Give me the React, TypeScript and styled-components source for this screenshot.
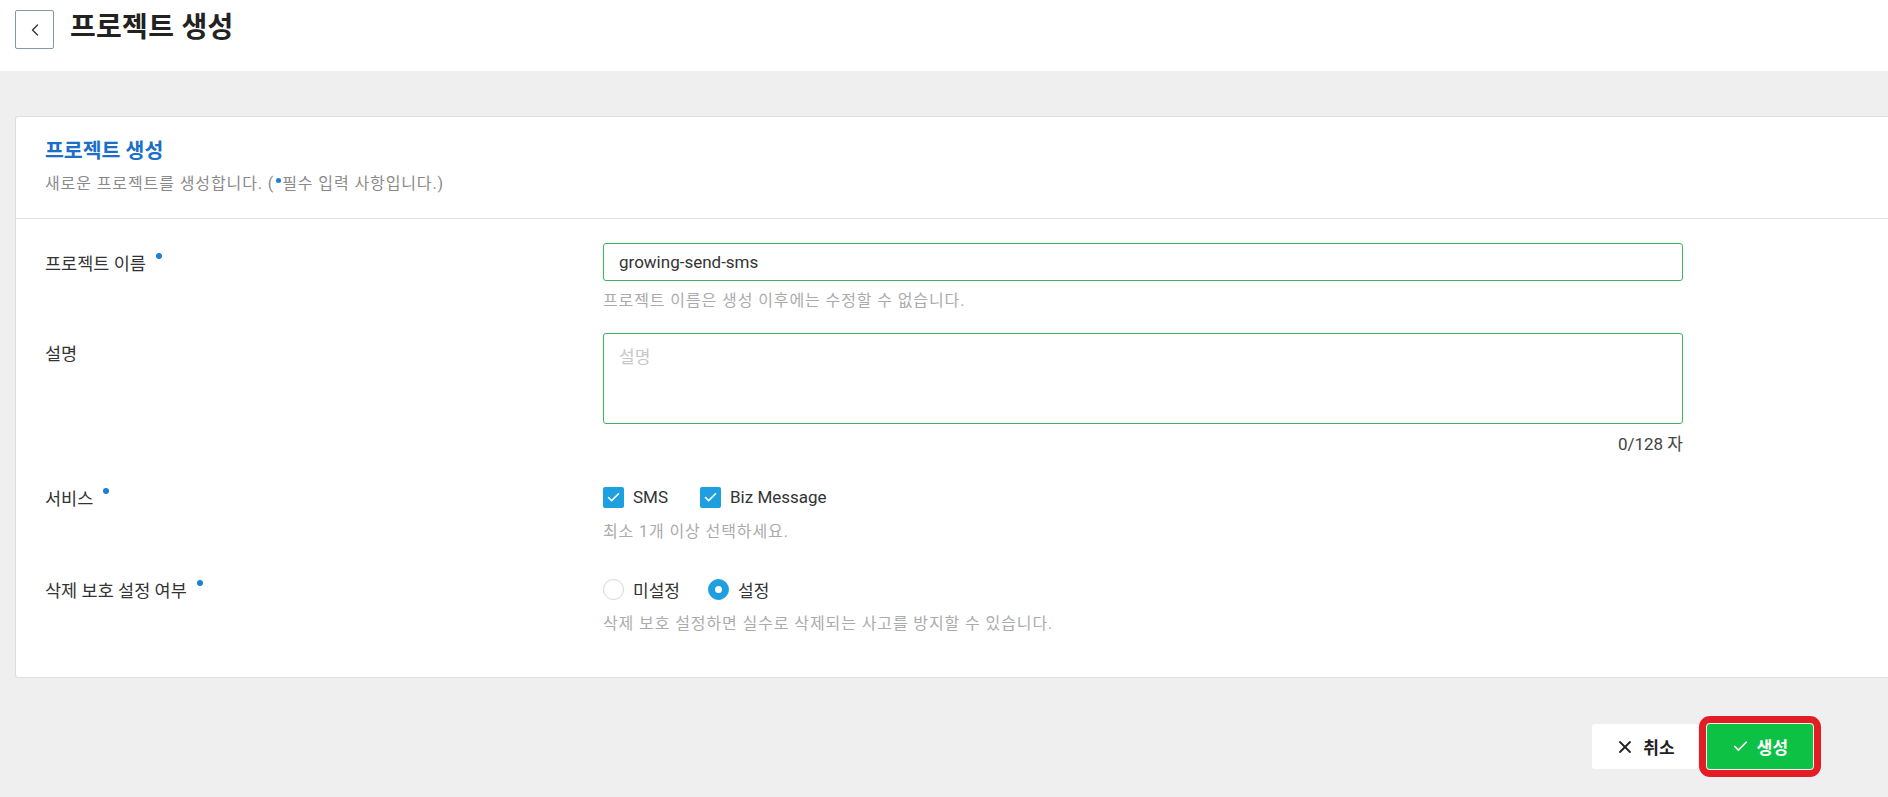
import React from "react";
import styled, { createGlobalStyle } from "styled-components";
import { ChevronLeft, X, Check } from "lucide-react";

const GlobalStyle = createGlobalStyle`
  html, body { margin: 0; padding: 0; }
  body {
    background: #efefef;
    font-family: "Roboto", "Noto Sans CJK KR", sans-serif;
    color: #333;
    overflow: hidden;
  }
  * { box-sizing: border-box; }
`;

const Page = styled.div`
  width: 1888px;
  min-height: 797px;
  background: #efefef;
  display: flex;
  flex-direction: column;
`;

const TopBar = styled.header`
  height: 71px;
  background: #fff;
  display: flex;
  align-items: flex-start;
  padding: 10px 0 0 15px;
  gap: 16px;
`;

const BackButton = styled.button`
  width: 39px;
  height: 39px;
  border: 1px solid #8497ad;
  border-radius: 2px;
  background: #fff;
  display: flex;
  align-items: center;
  justify-content: center;
  padding: 0;
  color: #333;
`;

const PageTitle = styled.h1`
  margin: 0;
  font-size: 28px;
  line-height: 36px;
  font-weight: 700;
  color: #222;
  letter-spacing: 0.3px;
`;

const Main = styled.main`
  padding: 45px 0 0 15px;
`;

const Card = styled.section`
  background: #fff;
  border: 1px solid #dedede;
  border-right: none;
  border-radius: 3px 0 0 3px;
`;

const CardHead = styled.div`
  padding: 21px 29px 0;
  height: 102px;
  border-bottom: 1px solid #e2e2e2;
`;

const CardTitle = styled.h2`
  margin: 0;
  font-size: 20.5px;
  font-weight: 700;
  color: #1b6fc6;
  line-height: 26px;
`;

const CardDesc = styled.p`
  margin: 10px 0 0;
  font-size: 16px;
  letter-spacing: 0.9px;
  color: #8a8a8a;
  line-height: 20px;
`;

const Dot = styled.span<{ $size?: number }>`
  display: inline-block;
  width: ${(p) => p.$size ?? 6}px;
  height: ${(p) => p.$size ?? 6}px;
  border-radius: 50%;
  background: #1a7fd9;
`;

const SmallDot = styled(Dot)`
  transform: translateY(-6px);
  margin: 0 1px 0 2px;
`;

const FormBody = styled.div`
  display: grid;
  grid-template-columns: 558px 1080px;
  padding: 24px 0 42px 29px;
`;

const Label = styled.div<{ $h: number; $mt: number }>`
  margin-top: ${(p) => p.$mt}px;
  height: ${(p) => p.$h}px;
  display: flex;
  align-items: center;
  font-size: 17.5px;
  color: #333;
`;

const LabelDot = styled(Dot)`
  margin-left: 10px;
  transform: translateY(-6px);
`;

const Field = styled.div<{ $mt: number }>`
  margin-top: ${(p) => p.$mt}px;
  display: flex;
  flex-direction: column;
`;

const TextInput = styled.input`
  height: 38px;
  border: 1px solid #3cb55a;
  border-radius: 3px;
  padding: 0 15px;
  font-family: "Roboto", "Noto Sans CJK KR", sans-serif;
  font-size: 17px;
  color: #333;
  outline: none;
`;

const TextArea = styled.textarea`
  height: 91px;
  border: 1px solid #3cb55a;
  border-radius: 3px;
  padding: 9px 15px;
  font-family: "Roboto", "Noto Sans CJK KR", sans-serif;
  font-size: 17px;
  color: #333;
  resize: none;
  outline: none;
  &::placeholder { color: #c6c6c6; }
`;

const Help = styled.div<{ $mt: number; $align?: string; $dark?: boolean }>`
  margin-top: ${(p) => p.$mt}px;
  line-height: 22px;
  font-size: ${(p) => (p.$dark ? 17 : 16)}px;
  letter-spacing: ${(p) => (p.$dark ? 0 : 0.9)}px;
  color: ${(p) => (p.$dark ? "#444" : "#ababab")};
  text-align: ${(p) => p.$align ?? "left"};
`;

const OptionRow = styled.div`
  height: 24px;
  display: flex;
  align-items: center;
  gap: 9px;
`;

const Option = styled.label<{ $w: number }>`
  width: ${(p) => p.$w}px;
  display: flex;
  align-items: center;
  gap: 9px;
  font-size: 17px;
  color: #333;
`;

const CheckBox = styled.span`
  width: 21px;
  height: 21px;
  border-radius: 2px;
  background: #1d9fe0;
  display: flex;
  align-items: center;
  justify-content: center;
  color: #fff;
`;

const Radio = styled.span<{ $on?: boolean }>`
  width: 21px;
  height: 21px;
  border-radius: 50%;
  background: ${(p) => (p.$on ? "#1d9fe0" : "#fff")};
  border: 1px solid ${(p) => (p.$on ? "#1d9fe0" : "#d6d6d6")};
  display: flex;
  align-items: center;
  justify-content: center;
  &::after {
    content: "";
    width: 7px;
    height: 7px;
    border-radius: 50%;
    background: ${(p) => (p.$on ? "#fff" : "transparent")};
  }
`;

const Footer = styled.div`
  display: flex;
  justify-content: flex-end;
  gap: 9px;
  padding: 46px 75px 0 0;
`;

const Button = styled.button<{ $primary?: boolean }>`
  height: 45px;
  width: 106px;
  border: none;
  border-radius: 3px;
  background: ${(p) => (p.$primary ? "#0cc144" : "#fff")};
  color: ${(p) => (p.$primary ? "#fff" : "#222")};
  font-family: "Roboto", "Noto Sans CJK KR", sans-serif;
  font-size: 17px;
  font-weight: 700;
  display: flex;
  align-items: center;
  justify-content: center;
  gap: 8px;
  ${(p) => (p.$primary ? "outline: 7px solid #e31d25; outline-offset: 1px;" : "")}
`;

export default function App() {
  return (
    <Page>
      <GlobalStyle />
      <TopBar>
        <BackButton aria-label="back">
          <ChevronLeft size={20} strokeWidth={1.6} />
        </BackButton>
        <PageTitle>프로젝트 생성</PageTitle>
      </TopBar>
      <Main>
        <Card>
          <CardHead>
            <CardTitle>프로젝트 생성</CardTitle>
            <CardDesc>
              새로운 프로젝트를 생성합니다. (<SmallDot $size={5} />필수 입력 사항입니다.)
            </CardDesc>
          </CardHead>
          <FormBody>
            <Label $h={38} $mt={0}>
              프로젝트 이름<LabelDot />
            </Label>
            <Field $mt={0}>
              <TextInput defaultValue="growing-send-sms" />
              <Help $mt={9}>프로젝트 이름은 생성 이후에는 수정할 수 없습니다.</Help>
            </Field>

            <Label $h={38} $mt={21}>설명</Label>
            <Field $mt={21}>
              <TextArea placeholder="설명" />
              <Help $mt={9} $align="right" $dark>0/128 자</Help>
            </Field>

            <Label $h={24} $mt={30}>
              서비스<LabelDot />
            </Label>
            <Field $mt={30}>
              <OptionRow>
                <Option $w={88}>
                  <CheckBox><Check size={15} strokeWidth={2.6} /></CheckBox>
                  SMS
                </Option>
                <Option $w={140}>
                  <CheckBox><Check size={15} strokeWidth={2.6} /></CheckBox>
                  Biz Message
                </Option>
              </OptionRow>
              <Help $mt={12}>최소 1개 이상 선택하세요.</Help>
            </Field>

            <Label $h={24} $mt={34}>
              삭제 보호 설정 여부<LabelDot />
            </Label>
            <Field $mt={34}>
              <OptionRow>
                <Option $w={96}>
                  <Radio />
                  미설정
                </Option>
                <Option $w={80}>
                  <Radio $on />
                  설정
                </Option>
              </OptionRow>
              <Help $mt={12}>삭제 보호 설정하면 실수로 삭제되는 사고를 방지할 수 있습니다.</Help>
            </Field>
          </FormBody>
        </Card>
        <Footer>
          <Button>
            <X size={20} strokeWidth={2.2} />
            취소
          </Button>
          <Button $primary>
            <Check size={17} strokeWidth={2.4} />
            생성
          </Button>
        </Footer>
      </Main>
    </Page>
  );
}
